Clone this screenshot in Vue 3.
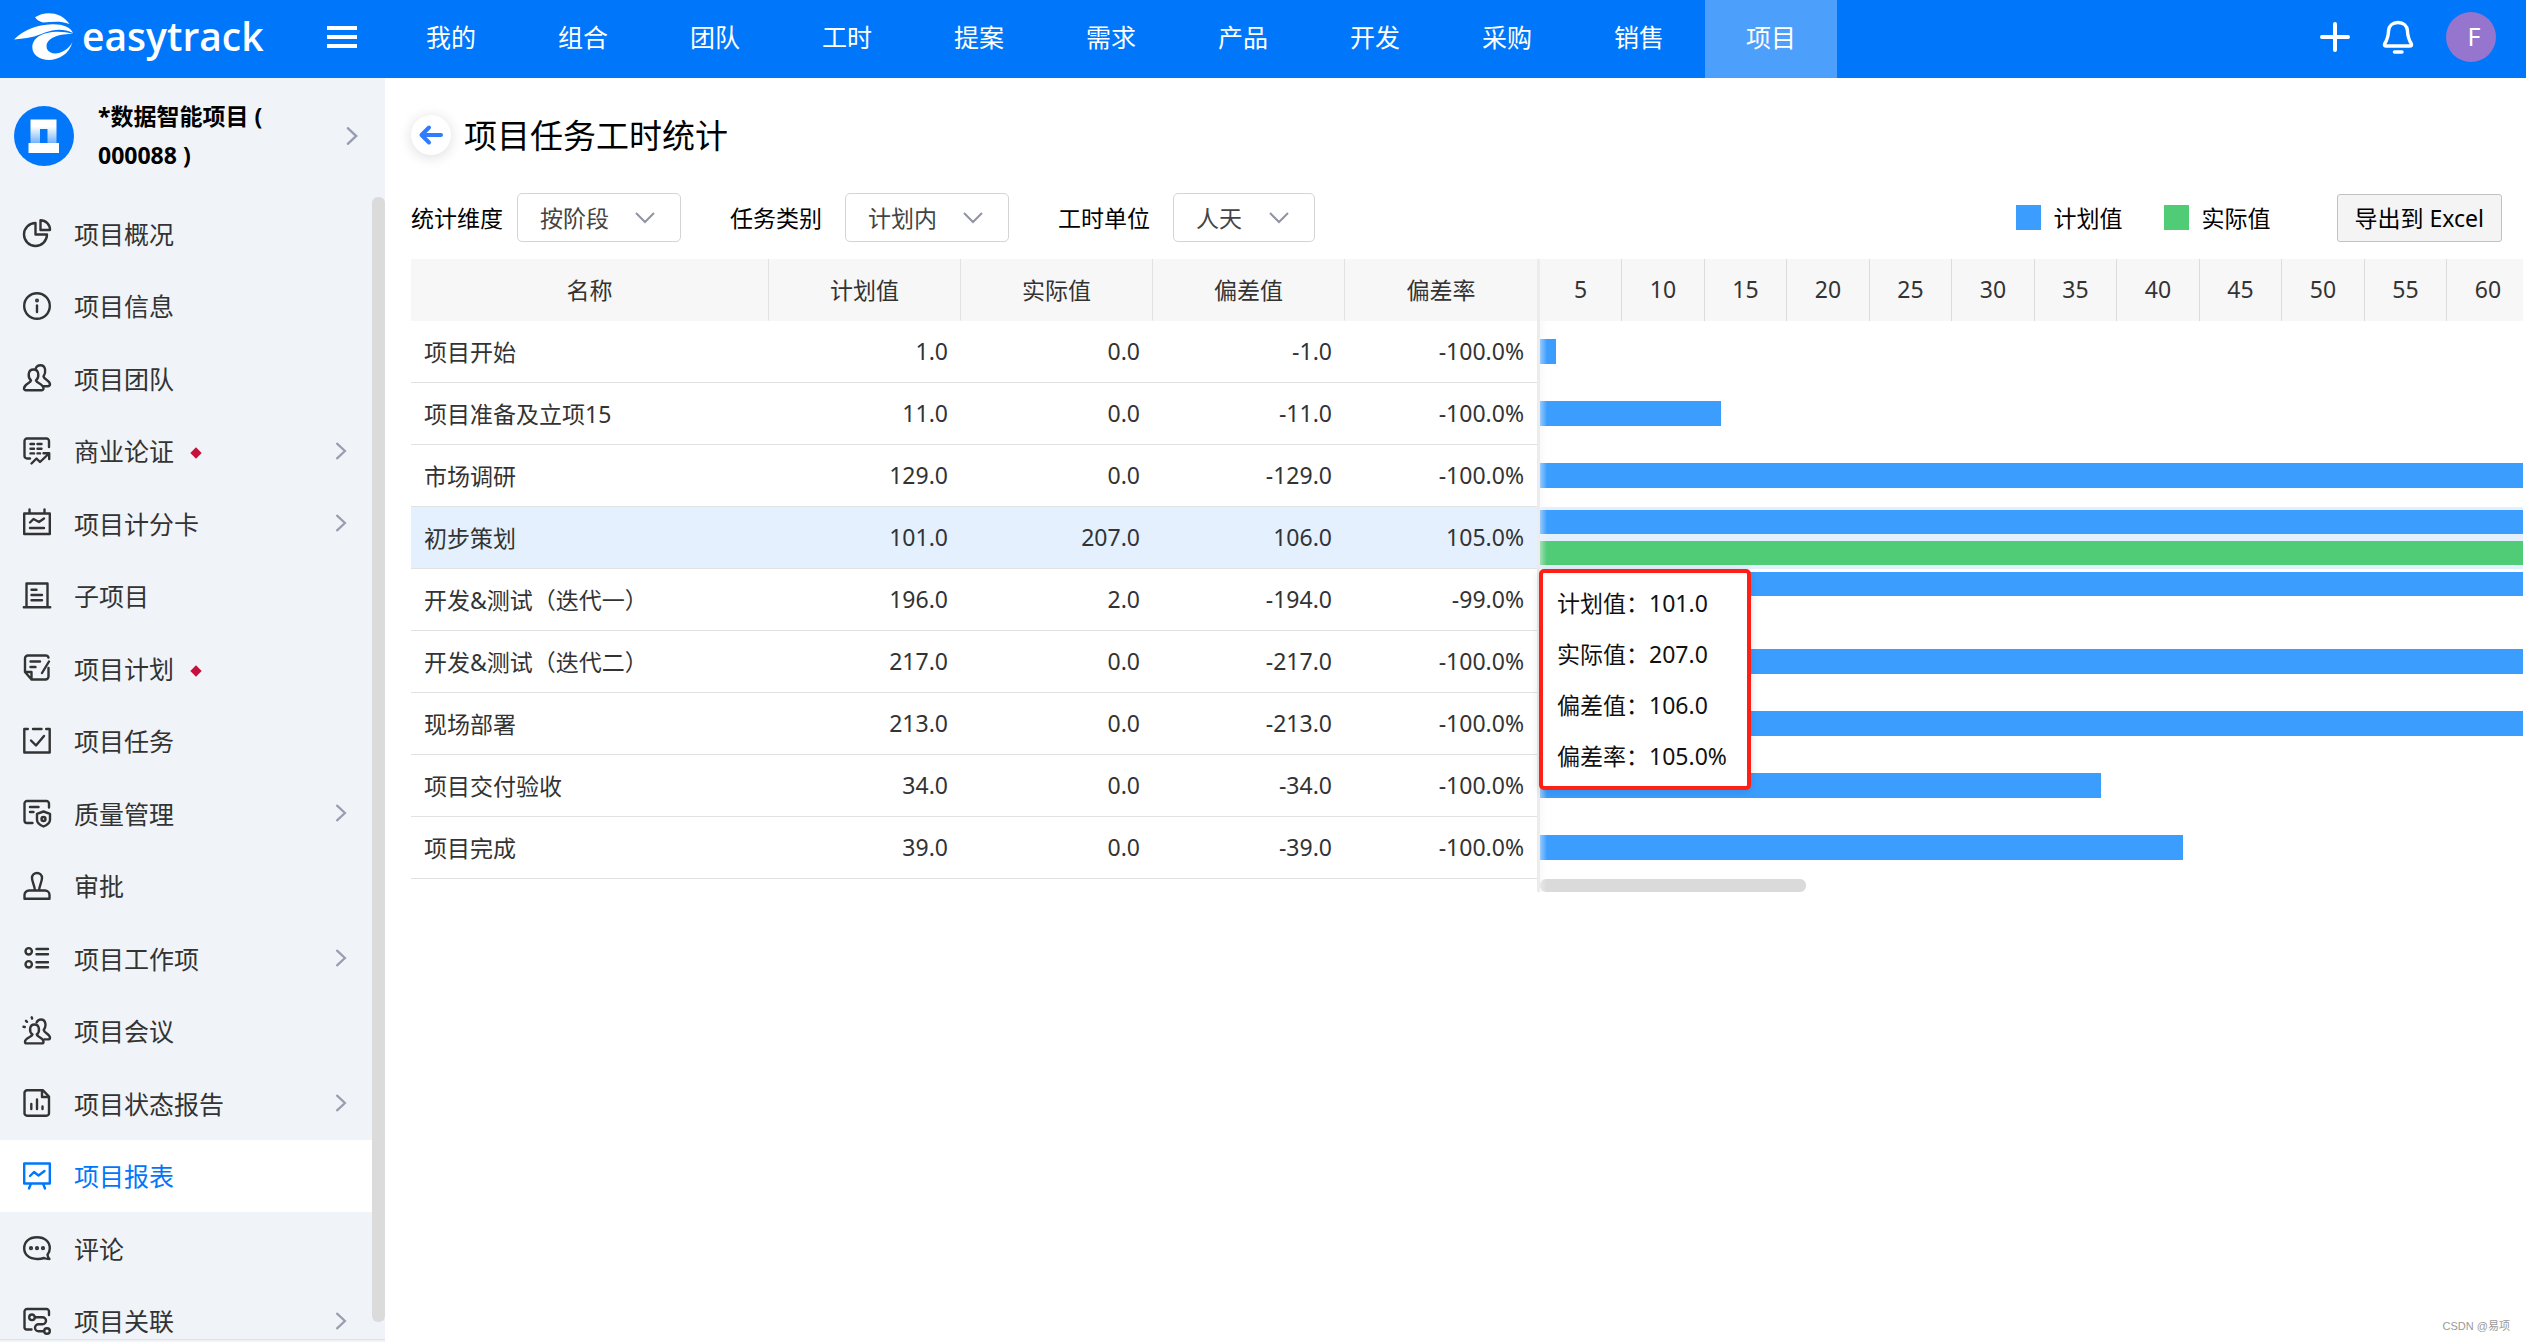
<script setup>
import { ref } from 'vue'

const topNav = ['我的', '组合', '团队', '工时', '提案', '需求', '产品', '开发', '采购', '销售', '项目']

const menu = [
  { name: '项目概况', icon: '<path d="M12.5 4A11.5 11.5 0 1 0 24 15.5H12.5z"/><path d="M17.5 1.2V11H27A9.5 9.5 0 0 0 17.5 1.2z"/>' },
  { name: '项目信息', icon: '<circle cx="14" cy="14" r="12.8"/><path d="M14 13.5v6.5"/><circle cx="14" cy="8.6" r="0.8"/>' },
  { name: '项目团队', icon: '<path d="M8 16.5C4.6 13.5 4.6 5.5 10.5 5.5s5.9 8 2.5 11c.6 2.600 7.500 3.500 7.500 8a1.800 1.800 0 0 1-1.800 1.800H2.800A1.800 1.800 0 0 1 1 24.500c0-4.500 6.400-5.400 7-8z"/><path d="M12.600 5C13.200 2.500 15 1.200 17.500 1.200c5.400 0 5.800 7.300 3 11.300.5 3 6.500 3.800 6.500 7.800 0 1.200-1 1.900-2.500 1.900h-4"/>' },
  { name: '商业论证', icon: '<path d="M7 21.500H4A2.500 2.500 0 0 1 1.500 19V4A2.500 2.500 0 0 1 4 1.500h19.500A2.500 2.500 0 0 1 26 4v6"/><path d="M7.500 7h3.500M14.500 7H18.500M7.500 11.700h3.500M14.500 11.700H18.500M7.500 16.400h3.500M14.500 16.400H17"/><path d="M8.500 26.500l5-5 3.500 3.500 9-8.500M20.500 16.300h5.700V22"/>', flag: true, more: true },
  { name: '项目计分卡', icon: '<path d="M1.200 4.500h25.600V25H1.200zM6.500.5v4M21.500.5v4M7 13.500l3.500-3.500 5.500 3 5-3.500M7 19h14"/>', more: true },
  { name: '子项目', icon: '<path d="M3.500 25V1.500h21V25M.8 25.300h26.400M8.500 7.700h5M8.500 13h10.500M8.500 18.200h10.500"/>' },
  { name: '项目计划', icon: '<path d="M25.500 3.500A3 3 0 0 0 23 1.500H5a3 3 0 0 0-3 3V18l6.500 7.500H22.500a3 3 0 0 0 3-3V14M2 18h6.500v7.500M7.500 7.500H17M7.500 13h5M26 7.500l-7 11.500"/>', flag: true },
  { name: '项目任务', icon: '<path d="M4.800 2H1.300v23.500h25.400V2h-3.500M10 2h8.500M8 13.500l5 5 8-9.500"/>' },
  { name: '质量管理', icon: '<path d="M9.500 24H4a2.500 2.500 0 0 1-2.500-2.500V4.500A2.500 2.500 0 0 1 4 2h19.500A2.500 2.500 0 0 1 26 4.500v4M7 8h8.500M7 13h3.500M20.500 12.500l6.500 2.300v6c0 3-3 5.400-6.500 6.700-3.500-1.300-6.500-3.700-6.500-6.700v-6z"/><circle cx="20.500" cy="20" r="2"/>', more: true },
  { name: '审批', icon: '<path d="M12 18.500C11.500 13 9 9.500 9 6a5 5 0 0 1 10 0c0 3.500-2.500 7-3 12.500M1.500 26.700v-3.700a4.500 4.500 0 0 1 4.500-4.500h16a4.500 4.500 0 0 1 4.500 4.500v3.700z"/>' },
  { name: '项目工作项', icon: '<circle cx="5.700" cy="7.300" r="3.200"/><circle cx="5.700" cy="20.300" r="3.200"/><path d="M13.500 5H25M13.500 10.300H25M13.500 18.300H25M13.500 23.300H25"/>', more: true },
  { name: '项目会议', icon: '<path d="M9.500 17.500C6 15 6 7.500 11.500 7.500s5.500 7.500 2.200 10c.6 2.600 6.800 3.300 6.800 7.200a1.700 1.700 0 0 1-1.700 1.700H3.700A1.700 1.700 0 0 1 2 24.700c0-3.900 7-4.600 7.500-7.200z"/><path d="M13.600 5.500C14.500 3.500 16 2.500 18 2.500c5.200 0 5.500 7 2.700 10.500.6 3 6.300 4.300 6.300 7.700 0 1-1 1.700-2.400 1.700h-3.400M8.700.3l.4 1.200M3 3.800l1 1M.5 9.800l1.300.2"/>' },
  { name: '项目状态报告', icon: '<path d="M20 1.300H4A2.500 2.500 0 0 0 1.500 3.800v20.400A2.500 2.500 0 0 0 4 26.700h19.500a2.500 2.500 0 0 0 2.500-2.500V7.500zM19 1.500V8h7M8.300 15v5M14 10.500V20M19.500 17.500V20"/>', more: true },
  { name: '项目报表', icon: '<path d="M1.200 1.500h25.600v20H1.200zM8 21.500l-2 5M20 21.500l2 5M7 14l4-4 4.500 3.500 6-4.500"/>', active: true },
  { name: '评论', icon: '<path d="M26.500 25c-3 0-4.500-.5-5.500-1a18 18 0 0 1-7 1C6 25 1.200 20.500 1.200 14.200S6 3.300 14 3.300s12.800 4.600 12.800 10.900c0 3-1 5-2.300 6.600.2 1.700.8 3 2 4.200z"/><circle cx="8" cy="14.200" r="0.900"/><circle cx="14" cy="14.200" r="0.900"/><circle cx="20" cy="14.200" r="0.900"/>' },
  { name: '项目关联', icon: '<path d="M8.500 22.500H3.500A2 2 0 0 1 1.500 20.500V4.500A2.500 2.500 0 0 1 4 2h19.500A2.500 2.500 0 0 1 26 4.500V8"/><circle cx="9" cy="10.300" r="2.800"/><circle cx="24" cy="24" r="2.800"/><path d="M12 10.300h7.500a3.500 3.500 0 0 1 0 7h-4a3.500 3.500 0 0 0 0 7H21"/>', more: true }
]

const filters = [
  { id: 'dimension', label: '统计维度', options: ['按阶段', '按成员'], value: ref('按阶段') },
  { id: 'category', label: '任务类别', options: ['计划内', '计划外'], value: ref('计划内'), wide: true },
  { id: 'unit', label: '工时单位', options: ['人天', '人时'], value: ref('人天'), wide: true, short: true }
]

const ticks = [5, 10, 15, 20, 25, 30, 35, 40, 45, 50, 55, 60]

const rows = [
  { name: '项目开始', plan: 1, actual: 0, rate: '-100.0%' },
  { name: '项目准备及立项15', plan: 11, actual: 0, rate: '-100.0%' },
  { name: '市场调研', plan: 129, actual: 0, rate: '-100.0%' },
  { name: '初步策划', plan: 101, actual: 207, rate: '105.0%', hover: true },
  { name: '开发&测试（迭代一）', plan: 196, actual: 2, rate: '-99.0%' },
  { name: '开发&测试（迭代二）', plan: 217, actual: 0, rate: '-100.0%' },
  { name: '现场部署', plan: 213, actual: 0, rate: '-100.0%' },
  { name: '项目交付验收', plan: 34, actual: 0, rate: '-100.0%' },
  { name: '项目完成', plan: 39, actual: 0, rate: '-100.0%' }
]

// Five units span one 82.5px tick cell.
const barWidth = (value) => Math.floor(value * 16.5) + 'px'
const fixed = (value) => value.toFixed(1)
</script>

<template>
  <div class="app">
    <header class="topbar">
      <div class="brand">
        <a class="logo" href="#">
          <svg class="logo-mark" viewBox="0 0 60 50" fill="#fff" aria-hidden="true">
            <path d="M21 5.300C30-1 47-1 55.500 12 46 8.500 38 10 29 10.500 26 10 23 8 21 5.300z" />
            <path d="M0 27.500C9 18 23 12.600 38 12.200 50 12 57 15.500 59 21 50 16.200 40 17 31 20.500 21 25 13 26.500 0 27.500z" />
            <path d="M59 22C43 17 19 20 18.300 35 18 52 52 54 58.500 30 52 42 37 45 33 37 30 27 43 21.500 59 22z" />
          </svg>
          <span class="logo-text">easytrack</span>
        </a>
        <button class="icon-button burger" aria-label="菜单"><i></i><i></i><i></i></button>
      </div>
      <nav class="topnav">
        <a v-for="item in topNav" :key="item" href="#" :class="{ active: item === '项目' }">{{ item }}</a>
      </nav>
      <div class="tools">
        <button class="icon-button" aria-label="新建">
          <svg width="30" height="34" viewBox="0 0 30 34" fill="none" stroke="#fff" stroke-width="4" stroke-linecap="round"><path d="M15 4v26M2 17h26" /></svg>
        </button>
        <button class="icon-button" aria-label="通知">
          <svg width="32" height="34" viewBox="0 0 32 34" fill="none" stroke="#fff" stroke-width="3.400" stroke-linecap="round" stroke-linejoin="round"><path d="M16 2.500C10.500 2.500 7 6 6.600 10.500 6.200 17 5.500 19.500 2.800 23.500 2 25.500 2.500 26 4.500 26h23c2 0 2.500-.5 1.700-2.500-2.700-4-3.400-6.500-3.800-13C25 6 21.500 2.500 16 2.500z" /><path d="M12.500 32h7.500" stroke-width="3.500" /></svg>
        </button>
        <button class="avatar">F</button>
      </div>
    </header>

    <div class="body">
      <aside class="sidebar">
        <div class="project">
          <svg class="project-icon" viewBox="0 0 60 60" aria-hidden="true">
            <defs><linearGradient id="tower" x1="0" y1="0" x2="0" y2="1"><stop offset="0.3" stop-color="#fff" /><stop offset="1" stop-color="#fff" stop-opacity="0.45" /></linearGradient></defs>
            <circle cx="30" cy="30" r="30" fill="#0377f9" />
            <path d="M16.500 13.500h26V37H33.500V23H26v14h-9.500z" fill="url(#tower)" />
            <path d="M14.500 37H45v10H14.500z" fill="#fff" />
          </svg>
          <strong class="project-name">*数据智能项目 ( 000088 )</strong>
          <svg class="chevron large" viewBox="0 0 10 16"><path d="M1.500 1.500L8.500 8l-7 6.500" /></svg>
        </div>
        <div class="menu-wrap">
          <ul class="menu">
            <li v-for="item in menu" :key="item.name">
              <a href="#" class="menu-item" :class="{ active: item.active }">
                <svg class="menu-icon" viewBox="0 0 28 28" aria-hidden="true" v-html="item.icon"></svg>
                <span>{{ item.name }}</span>
                <i v-if="item.flag" class="flag"></i>
                <svg v-if="item.more" class="chevron" viewBox="0 0 10 16"><path d="M1.500 1.500L8.500 8l-7 6.500" /></svg>
              </a>
            </li>
          </ul>
          <div class="menu-scroll"></div>
        </div>
      </aside>

      <main class="main">
        <div class="title-row">
          <button class="back" aria-label="返回">
            <svg width="26" height="26" viewBox="0 0 26 26" fill="none" stroke="#2f7dff" stroke-width="4" stroke-linecap="round" stroke-linejoin="round"><path d="M23 13H4M11 5.500L3.500 13l7.500 7.500" /></svg>
          </button>
          <h1>项目任务工时统计</h1>
        </div>

        <div class="filters">
          <div v-for="f in filters" :key="f.id" class="filter" :class="{ wide: f.wide }">
            <label :for="f.id">{{ f.label }}</label>
            <div class="select" :class="{ short: f.short }">
              <select :id="f.id" v-model="f.value.value">
                <option v-for="o in f.options" :key="o">{{ o }}</option>
              </select>
              <svg viewBox="0 0 20 12" aria-hidden="true"><path d="M1 1l9 9 9-9" /></svg>
            </div>
          </div>
          <div class="legend">
            <div><i class="plan"></i><span>计划值</span></div>
            <div><i class="actual"></i><span>实际值</span></div>
          </div>
          <button class="export">导出到 Excel</button>
        </div>

        <div class="report">
          <table>
            <colgroup><col class="col-name" /><col /><col /><col /><col /></colgroup>
            <thead>
              <tr><th>名称</th><th>计划值</th><th>实际值</th><th>偏差值</th><th>偏差率</th></tr>
            </thead>
            <tbody>
              <tr v-for="row in rows" :key="row.name" :class="{ hover: row.hover }">
                <td>{{ row.name }}</td>
                <td>{{ fixed(row.plan) }}</td>
                <td>{{ fixed(row.actual) }}</td>
                <td>{{ fixed(row.actual - row.plan) }}</td>
                <td>{{ row.rate }}</td>
              </tr>
            </tbody>
          </table>
          <div class="divider"></div>
          <div class="chart">
            <div class="ticks"><span v-for="t in ticks" :key="t">{{ t }}</span></div>
            <div v-for="row in rows" :key="row.name" class="track-row" :class="{ hover: row.hover, double: row.actual > 0 }">
              <div class="track">
                <div class="bar plan" :style="{ width: barWidth(row.plan) }"></div>
                <div v-if="row.actual" class="bar actual" :style="{ width: barWidth(row.actual) }"></div>
              </div>
              <div v-if="row.hover" class="tooltip" role="tooltip">
                <div>计划值：{{ fixed(row.plan) }}</div>
                <div>实际值：{{ fixed(row.actual) }}</div>
                <div>偏差值：{{ fixed(row.actual - row.plan) }}</div>
                <div>偏差率：{{ row.rate }}</div>
              </div>
            </div>
            <div class="chart-scroll"></div>
          </div>
        </div>
        <div class="watermark">CSDN @易项</div>
      </main>
    </div>
  </div>
</template>

<style>
body {
  margin: 0;
}
</style>

<style scoped>
.app {
  display: flex;
  flex-direction: column;
  height: 100vh;
  overflow: hidden;
  background: #fff;
  color: #333;
  font-family: "Noto Sans", "Noto Sans CJK SC", sans-serif;
  font-size: 23px;
}
.app *,
.app *::before {
  box-sizing: border-box;
}
button,
select {
  font: inherit;
  color: inherit;
}
a {
  color: inherit;
  text-decoration: none;
}

.topbar {
  display: flex;
  flex: none;
  height: 78px;
  background: #0077fa;
  color: #fff;
}
.brand {
  display: flex;
  flex: none;
  align-items: center;
  justify-content: space-between;
  width: 385px;
  padding: 0 28px 4px 14px;
}
.logo {
  display: flex;
  align-items: center;
  gap: 8px;
}
.logo-mark {
  width: 60px;
  height: 50px;
}
.logo-text {
  padding-bottom: 2px;
  font-family: "Open Sans", sans-serif;
  font-size: 39px;
  font-weight: 600;
  line-height: 54px;
}
.icon-button {
  display: flex;
  padding: 0;
  border: 0;
  background: none;
}
.burger {
  flex-direction: column;
  gap: 5px;
}
.burger i {
  width: 30px;
  height: 4px;
  background: #fff;
}
.topnav {
  display: flex;
}
.topnav a {
  width: 132px;
  padding-bottom: 4px;
  font-size: 25px;
  line-height: 74px;
  text-align: center;
}
.topnav a.active {
  background: #4d9ffc;
}
.tools {
  display: flex;
  align-items: center;
  gap: 32px;
  margin-left: auto;
  padding: 0 30px 4px 0;
}
.avatar {
  width: 50px;
  height: 50px;
  padding: 0 0 2px 6px;
  border: 0;
  border-radius: 50%;
  background: #9575cd;
  font-size: 25px;
  line-height: 48px;
}

.body {
  display: flex;
  flex: 1;
  min-height: 0;
}
.sidebar {
  display: flex;
  flex: none;
  flex-direction: column;
  width: 385px;
  padding-bottom: 2px;
  background: #f0f4f8;
}
.project {
  display: flex;
  flex: none;
  align-items: center;
  height: 119px;
  padding: 0 27px 3px 14px;
}
.project-icon {
  flex: none;
  width: 60px;
  height: 60px;
  margin-right: 24px;
}
.project-name {
  width: 180px;
  color: #000;
  line-height: 39px;
}
.chevron {
  flex: none;
  width: 12px;
  height: 18px;
  margin-left: auto;
  fill: none;
  stroke: #989eb0;
  stroke-width: 2;
  stroke-linecap: round;
}
.chevron.large {
  height: 20px;
}
.menu-wrap {
  display: flex;
  flex: 1;
  min-height: 0;
  overflow: hidden;
  border-bottom: 1px solid #dce2e8;
}
.menu {
  display: grid;
  flex: 1;
  grid-auto-rows: 73px 72px;
  margin: 0;
  padding: 0;
  list-style: none;
}
.menu-item {
  display: flex;
  align-items: center;
  height: 100%;
  padding: 0 25px 1px 23px;
  font-size: 25px;
}
.menu-item span {
  padding-bottom: 1px;
}
.menu-item.active {
  background: #fff;
  color: #0077fa;
}
.menu-icon {
  width: 28px;
  height: 28px;
  margin-right: 23px;
  overflow: visible;
  fill: none;
  stroke: currentColor;
  stroke-width: 2.4;
  stroke-linecap: round;
  stroke-linejoin: round;
}
.flag {
  width: 8px;
  height: 8px;
  margin: 5px 0 0 18px;
  background: #c8103e;
  transform: rotate(45deg);
}
.menu-scroll {
  flex: none;
  width: 13px;
  margin-bottom: 17px;
  border-radius: 6px;
  background: #dbdbdb;
}

.main {
  position: relative;
  display: flex;
  flex: 1;
  flex-direction: column;
  min-width: 0;
  padding: 37px 3px 0 26px;
}
.title-row {
  display: flex;
  align-items: center;
  gap: 13px;
  height: 40px;
}
.title-row h1 {
  margin: 0;
  padding-bottom: 2px;
  color: #000;
  font-size: 33px;
  font-weight: 400;
}
.back {
  display: flex;
  align-items: center;
  justify-content: center;
  width: 40px;
  height: 40px;
  padding: 0;
  border: 0;
  border-radius: 50%;
  background: #fff;
  box-shadow: 0 2px 14px rgba(0, 0, 0, 0.14);
}
.filters {
  display: flex;
  align-items: center;
  margin-top: 38px;
  padding-right: 21px;
  color: #000;
}
.filter {
  display: flex;
  align-items: center;
  gap: 14px;
  margin-right: 49px;
}
.filter.wide {
  gap: 23px;
}
.filter label,
.legend span {
  padding-bottom: 2px;
}
.select {
  position: relative;
  width: 164px;
}
.select.short {
  width: 142px;
}
.select select {
  width: 100%;
  height: 49px;
  padding: 0 22px;
  border: 1px solid #d4d4d4;
  border-radius: 5px;
  appearance: none;
  background: #fff;
  color: #444;
}
.select svg {
  position: absolute;
  top: 19px;
  right: 26px;
  width: 20px;
  height: 12px;
  fill: none;
  stroke: #8f94a3;
  stroke-width: 2;
  pointer-events: none;
}
.legend {
  display: flex;
  gap: 41px;
  margin-left: auto;
}
.legend div {
  display: flex;
  align-items: center;
  gap: 13px;
}
.legend i {
  width: 25px;
  height: 25px;
}
.plan {
  background: #3b9eff;
}
.actual {
  background: #50cb76;
}
.export {
  height: 48px;
  margin-left: 66px;
  padding: 0 17px 2px;
  border: 1px solid #c2c2c2;
  border-radius: 3px;
  background: #f4f4f4;
}

.report {
  display: flex;
  margin-top: 17px;
}
table {
  flex: none;
  width: 1126px;
  align-self: flex-start;
  border-spacing: 0;
  table-layout: fixed;
}
.col-name {
  width: 358px;
}
th,
td {
  height: 62px;
  padding: 0 13px 2px;
  border-bottom: 1px solid #e2e2e2;
  text-align: right;
}
th {
  border-right: 1px solid #e2e2e2;
  border-bottom-color: #f7f7f7;
  background: #f7f7f7;
  font-weight: 400;
  text-align: center;
}
th:last-child {
  border-right: 0;
}
td:first-child {
  text-align: left;
}
tr.hover td {
  background: #e4f0fd;
}
.divider {
  flex: none;
  width: 3px;
  background: #ececec;
}
.chart {
  position: relative;
  flex: 1;
  min-width: 0;
}
.chart::before {
  position: absolute;
  z-index: 1;
  top: 62px;
  bottom: 0;
  left: 0;
  width: 7px;
  background: linear-gradient(90deg, rgba(245, 245, 245, 0.5), rgba(245, 245, 245, 0));
  content: "";
}
.ticks {
  display: grid;
  grid-template-columns: repeat(6, 82px 83px);
  overflow: hidden;
  background: #f7f7f7;
  line-height: 61px;
  text-align: center;
}
.ticks span {
  height: 62px;
  border-right: 1px solid #dcdcdc;
}
.track-row {
  position: relative;
  height: 62px;
}
.track-row.hover {
  background: #e4f0fd;
}
.track {
  display: flex;
  flex-direction: column;
  justify-content: center;
  gap: 7px;
  height: 100%;
  padding-bottom: 1px;
  overflow: hidden;
}
.bar {
  height: 25px;
}
.double .bar {
  height: 24px;
}
.tooltip {
  position: absolute;
  z-index: 2;
  top: 100%;
  left: -1px;
  padding: 5px 20px 4px 14px;
  border: 4px solid #ff1f14;
  border-radius: 5px;
  background: #fff;
  box-shadow: 0 2px 10px rgba(0, 0, 0, 0.12);
  color: #111;
  line-height: 51px;
  white-space: nowrap;
}
.chart-scroll {
  width: 266px;
  height: 13px;
  border-radius: 6px;
  background: #dadada;
}
.watermark {
  margin: auto 13px 8px auto;
  color: #999;
  font-family: "Liberation Sans", "Noto Sans CJK SC", sans-serif;
  font-size: 11px;
  line-height: 16px;
}
</style>
